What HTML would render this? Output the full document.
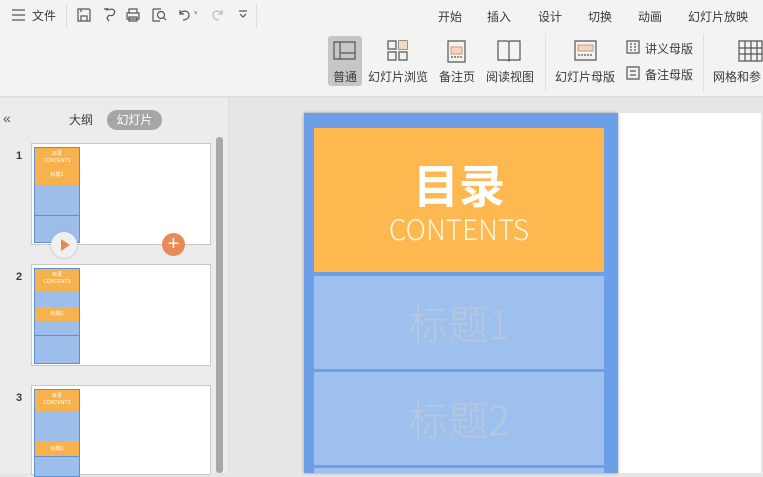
<!DOCTYPE html>
<html><head><meta charset="utf-8"><style>
*{margin:0;padding:0;box-sizing:border-box}
body{width:763px;height:473px;overflow:hidden;background:#e6e6e6;font-family:"Liberation Sans","Noto Sans CJK SC",sans-serif;font-size:12px;color:#333;position:relative}
.a{position:absolute}
.t{position:absolute;white-space:nowrap;font-size:12px;color:#3a3a3a}
svg{position:absolute;overflow:visible}
.ic{fill:none;stroke:#555;stroke-width:1.2}
.thumb{position:absolute;left:31px;width:180px;height:102px;background:#fff;border:1px solid #c8c8c8}
.mini{position:absolute;left:2px;top:3px;width:46px;height:96px;background:#9dbdeb;border:1px solid #5b8fd6}
.mo{position:absolute;left:0;width:44px;background:#f7b24e;color:#fff;font-size:5px;line-height:7px;text-align:center}
</style></head><body>
<div class="a" style="left:0;top:0;width:763px;height:97px;background:#f3f3f3;border-bottom:1px solid #dcdcdc"></div>
<div class="a" style="left:66px;top:4px;width:1px;height:24px;background:#ddd"></div>
<div class="a" style="left:256px;top:4px;width:1px;height:24px;background:#ddd"></div>
<div class="a" style="left:545px;top:34px;width:1px;height:58px;background:#e0e0e0"></div>
<div class="a" style="left:703px;top:34px;width:1px;height:58px;background:#e0e0e0"></div>
<svg style="left:12px;top:9px" width="14" height="12"><path class="ic" d="M0 1H13M0 6H13M0 11H13"/></svg>
<div class="t" style="left:32px;top:7px">文件</div>
<svg style="left:77px;top:8px" width="14" height="14"><path class="ic" d="M1 1H12L13 2V13H1ZM4 13V8H10V13M4 1V4"/></svg>
<svg style="left:103px;top:7px" width="14" height="16"><path class="ic" d="M1 2H6M4 1V4M6 3C9 1 13 3 11 7C10 9 7 9 6 8M6 8L4 11L6 14"/></svg>
<svg style="left:126px;top:8px" width="14" height="14"><path class="ic" d="M3 5V1H11V5M1 5H13V11H1ZM3 9H11V13H3Z"/></svg>
<svg style="left:152px;top:8px" width="16" height="14"><path class="ic" d="M1 1H9M1 1V13H8"/><circle class="ic" cx="9" cy="7" r="3.5"/><path class="ic" d="M11.5 9.5L14 12"/></svg>
<svg style="left:178px;top:9px" width="14" height="12"><path class="ic" d="M2 1V5H6M2 5C4 1 11 1 11 6C11 10 7 11 5 11"/></svg>
<div class="t" style="left:194px;top:9px;font-size:7px;color:#999">▾</div>
<svg style="left:210px;top:9px" width="14" height="12"><path class="ic" style="stroke:#bbb" d="M12 1V5H8M12 5C10 1 3 1 3 6C3 10 7 11 9 11"/></svg>
<svg style="left:238px;top:10px" width="10" height="10"><path class="ic" d="M1 1H9M2 4L5 7L8 4"/></svg>
<div class="t" style="left:438px;top:8px">开始</div>
<div class="t" style="left:487px;top:8px">插入</div>
<div class="t" style="left:538px;top:8px">设计</div>
<div class="t" style="left:588px;top:8px">切换</div>
<div class="t" style="left:638px;top:8px">动画</div>
<div class="t" style="left:688px;top:8px">幻灯片放映</div>
<div class="a" style="left:328px;top:36px;width:34px;height:50px;background:#c6c6c6;border-radius:3px"></div>
<svg style="left:333px;top:41px" width="24" height="20"><path class="ic" d="M1 1H22V18H1ZM7 1V18M7 12H22"/></svg>
<div class="t" style="left:333px;top:68px">普通</div>
<svg style="left:387px;top:40px" width="22" height="22"><path class="ic" d="M1 1H9V9H1ZM12 1H20V9H12ZM1 12H9V20H1ZM12 12H20V20H12Z"/><rect x="12" y="1" width="8" height="8" fill="#f5d8bd"/></svg>
<div class="t" style="left:368px;top:68px">幻灯片浏览</div>
<svg style="left:447px;top:40px" width="20" height="24"><path class="ic" d="M1 1H18V22H1Z"/><path d="M4 7H15V14H4Z" fill="#f5d3bd" stroke="#c97" stroke-width="1"/><path class="ic" d="M4 17H15" stroke-dasharray="2 1"/></svg>
<div class="t" style="left:439px;top:68px">备注页</div>
<svg style="left:497px;top:40px" width="24" height="22"><path class="ic" d="M1 1H11L12 2L13 1H23V20H13L12 21L11 20H1ZM12 2V20"/></svg>
<div class="t" style="left:486px;top:68px">阅读视图</div>
<svg style="left:574px;top:40px" width="24" height="22"><path class="ic" d="M1 1H22V20H1Z"/><path d="M4 5H19V11H4Z" fill="#f5d3bd" stroke="#c97"/><path class="ic" d="M4 15H19" stroke-dasharray="2 1"/></svg>
<div class="t" style="left:555px;top:68px">幻灯片母版</div>
<svg style="left:626px;top:40px" width="14" height="14"><path class="ic" d="M1 1H13V13H1ZM4 4H6M8 4H10M4 7H6M8 7H10M4 10H6M8 10H10"/></svg>
<div class="t" style="left:645px;top:40px">讲义母版</div>
<svg style="left:626px;top:66px" width="14" height="14"><path class="ic" d="M1 1H13V13H1ZM4 5H10M4 9H10"/></svg>
<div class="t" style="left:645px;top:66px">备注母版</div>
<svg style="left:738px;top:40px" width="25" height="22"><path class="ic" d="M1 1H24V21H1ZM7 1V21M13 1V21M19 1V21M1 8H24M1 14H24"/></svg>
<div class="t" style="left:713px;top:68px">网格和参</div>
<div class="a" style="left:0;top:98px;width:229px;height:375px;background:#ececec;border-right:1px solid #ddd"></div>
<div class="t" style="left:3px;top:110px;font-size:14px;color:#555">«</div>
<div class="t" style="left:69px;top:111px">大纲</div>
<div class="a" style="left:107px;top:110px;width:55px;height:20px;background:#a6a6a6;border-radius:10px;color:#fff;text-align:center;line-height:20px">幻灯片</div>
<div class="a" style="left:216px;top:137px;width:7px;height:336px;background:#a8a8a8;border-radius:3px"></div>
<div class="t" style="left:16px;top:150px;font-weight:bold;font-size:11px">1</div>
<div class="thumb" style="top:143px"><div class="mini"><div class="mo" style="top:0;height:38px;padding-top:3px">目录<br>CONTENTS<br><br>标题1</div><div class="a" style="left:0;top:67px;width:44px;border-top:1px solid #5b8fd6"></div></div></div>
<div class="a" style="left:51px;top:232px;width:26px;height:26px;border-radius:50%;background:#f0f0f0;box-shadow:0 0 2px #aaa"></div>
<div class="a" style="left:61px;top:239px;width:0;height:0;border-left:9px solid #e08a55;border-top:6px solid transparent;border-bottom:6px solid transparent"></div>
<div class="a" style="left:162px;top:233px;width:23px;height:23px;border-radius:50%;background:#e68a57;color:#fff;font-size:20px;line-height:22px;text-align:center">+</div>
<div class="t" style="left:16px;top:271px;font-weight:bold;font-size:11px">2</div>
<div class="thumb" style="top:264px"><div class="mini"><div class="mo" style="top:0;height:22px;padding-top:3px">目录<br>CONTENTS</div><div class="mo" style="top:38px;height:14px;line-height:14px">标题2</div><div class="a" style="left:0;top:66px;width:44px;border-top:1px solid #5b8fd6"></div></div></div>
<div class="t" style="left:16px;top:392px;font-weight:bold;font-size:11px">3</div>
<div class="thumb" style="top:385px;height:90px"><div class="mini" style="height:88px"><div class="mo" style="top:0;height:22px;padding-top:3px">目录<br>CONTENTS</div><div class="mo" style="top:52px;height:14px;line-height:14px">标题3</div><div class="a" style="left:0;top:66px;width:44px;border-top:1px solid #5b8fd6"></div></div></div>
<div class="a" style="left:230px;top:98px;width:533px;height:375px;background:#e6e6e6"></div>
<div class="a" style="left:618px;top:113px;width:143px;height:360px;background:#fff"></div>
<div class="a" style="left:304px;top:113px;width:314px;height:360px;background:#6c9fe8;box-shadow:0 0 3px #999"></div>
<div class="a" style="left:314px;top:128px;width:290px;height:144px;background:#fdb84f;color:#fff;text-align:center">
<div style="font-size:46px;font-weight:bold;line-height:50px;margin-top:31px;font-family:'Noto Sans CJK SC',sans-serif">目录</div>
<div style="font-size:28px;line-height:30px;margin-top:5px;color:#fff6dc;font-family:'Noto Sans CJK SC',sans-serif;font-weight:300">CONTENTS</div></div>
<div class="a" style="left:314px;top:276px;width:290px;height:93px;background:#9dc0ee;color:#b9c6dc;font-size:40px;text-align:center;line-height:93px;font-family:'Noto Sans CJK SC',sans-serif;font-weight:300">标题1</div>
<div class="a" style="left:314px;top:372px;width:290px;height:93px;background:#9dc0ee;color:#b9c6dc;font-size:40px;text-align:center;line-height:93px;font-family:'Noto Sans CJK SC',sans-serif;font-weight:300">标题2</div>
<div class="a" style="left:314px;top:468px;width:290px;height:5px;background:#9dc0ee"></div>
</body></html>
